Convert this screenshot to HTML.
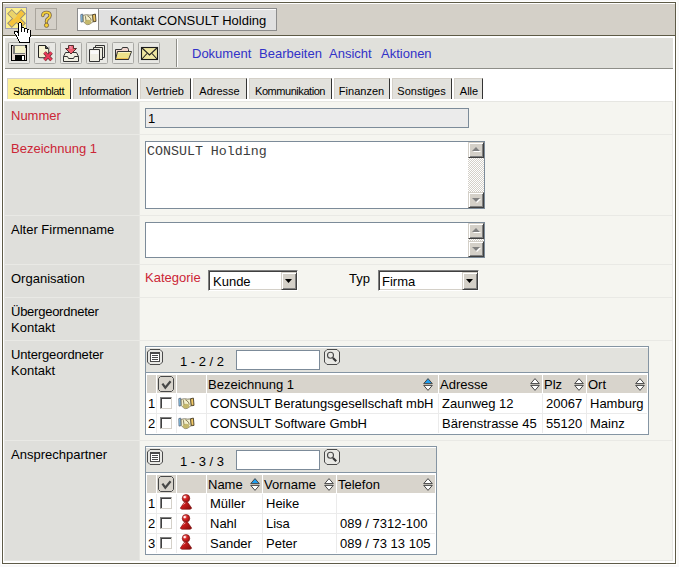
<!DOCTYPE html>
<html><head><meta charset="utf-8">
<style>
*{box-sizing:border-box;margin:0;padding:0}
html,body{width:679px;height:567px;overflow:hidden;background:#f8f8f8;font-family:"Liberation Sans",sans-serif;font-size:13px;color:#000}
.a{position:absolute}
.t{position:absolute;white-space:nowrap;line-height:13px;font-size:13px}
.ts{position:absolute;white-space:nowrap;line-height:11px;font-size:11px}
.red{color:#cc2636}

.sbtrack{background-color:#fff;background-image:linear-gradient(45deg,#d4d0c8 25%,transparent 25%,transparent 75%,#d4d0c8 75%),linear-gradient(45deg,#d4d0c8 25%,transparent 25%,transparent 75%,#d4d0c8 75%);background-size:2px 2px;background-position:0 0,1px 1px}
.sbup,.sbdn{width:16px;height:16px;background:#d4d0c8;border-top:1px solid #d4d0c8;border-left:1px solid #d4d0c8;border-right:1px solid #404040;border-bottom:1px solid #404040;box-shadow:inset 1px 1px 0 #fff,inset -1px -1px 0 #808080}
.sbup:after{content:"";position:absolute;left:3px;top:4px;border-left:4px solid transparent;border-right:4px solid transparent;border-bottom:4px solid #808080;filter:drop-shadow(1px 1px 0 #fff)}
.sbdn:after{content:"";position:absolute;left:3px;top:5px;border-left:4px solid transparent;border-right:4px solid transparent;border-top:4px solid #808080;filter:drop-shadow(1px 1px 0 #fff)}
.sel{height:21px;background:#fff;border-top:1px solid #808080;border-left:1px solid #808080;border-right:1px solid #fff;border-bottom:1px solid #fff;box-shadow:inset 1px 1px 0 #404040,inset -1px -1px 0 #d4d0c8}
.selbtn{width:16px;height:18px;background:#d4d0c8;border-top:1px solid #d4d0c8;border-left:1px solid #d4d0c8;border-right:1px solid #404040;border-bottom:1px solid #404040;box-shadow:inset 1px 1px 0 #fff,inset -1px -1px 0 #808080}
.selbtn:after{content:"";position:absolute;left:3px;top:6px;width:7px;height:4px;background:#000;clip-path:polygon(0 0,100% 0,50% 100%)}
</style></head><body>
<!-- outer frame -->
<div class="a" style="left:2px;top:2px;width:674px;height:562px;border:1px solid #5e5b47;background:#fff;box-shadow:0 0 0 1px #fff"></div>
<!-- title bar -->
<div class="a" style="left:3px;top:4px;width:672px;height:31px;background:#d4d0c8"></div>
<div class="a" style="left:3px;top:35px;width:672px;height:1px;background:#5e5b47"></div>
<!-- X button -->
<div class="a" style="left:5px;top:7px;width:22px;height:22px;border:1px solid #9a9aae;background:#fdf08e"></div>
<!-- ? button -->
<div class="a" style="left:35px;top:8px;width:22px;height:22px;border:1px solid #a9a59d;background:#d4d0c8"></div>
<!-- handshake box -->
<div class="a" style="left:77px;top:8px;width:22px;height:23px;border:1px solid #8c8c8c;background:#fff"></div>
<!-- title label -->
<div class="a" style="left:98px;top:8px;width:179px;height:23px;border:1px solid #8c8c8c;border-top-color:#8c8c8c;background:#e0e0e0;box-shadow:inset 0 1px 0 #fff"></div>
<div class="t" style="left:110px;top:14px">Kontakt CONSULT Holding</div>

<!-- toolbar -->
<div class="a" style="left:5px;top:38px;width:668px;height:30px;background:#e0e0db"></div>
<div class="a" style="left:5px;top:68px;width:668px;height:1px;background:#8e8e88"></div>
<div class="a" style="left:176px;top:39px;width:1px;height:28px;background:#8e8e88"></div>
<div class="a" style="left:177px;top:39px;width:1px;height:28px;background:#fff"></div>
<div class="t" style="left:192px;top:47px;color:#3232c8">Dokument</div>
<div class="t" style="left:259px;top:47px;color:#3232c8">Bearbeiten</div>
<div class="t" style="left:329px;top:47px;color:#3232c8">Ansicht</div>
<div class="t" style="left:381px;top:47px;color:#3232c8">Aktionen</div>

<!-- tabs -->
<div class="a" style="left:7px;top:78px;width:64px;height:21px;border-top:1px solid #d4d0c8;border-left:1px solid #d4d0c8;border-right:1px solid #333;background:#fdf197"></div>
<div class="ts" style="left:7px;top:86px;width:63px;text-align:center;letter-spacing:-0.45px">Stammblatt</div>
<div class="a" style="left:73px;top:78px;width:65px;height:21px;border-top:1px solid #d4d0c8;border-left:1px solid #d4d0c8;border-right:1px solid #333;background:#e2e1dc"></div>
<div class="ts" style="left:73px;top:86px;width:64px;text-align:center;letter-spacing:-0.25px">Information</div>
<div class="a" style="left:140px;top:78px;width:51px;height:21px;border-top:1px solid #d4d0c8;border-left:1px solid #d4d0c8;border-right:1px solid #333;background:#e2e1dc"></div>
<div class="ts" style="left:140px;top:86px;width:50px;text-align:center">Vertrieb</div>
<div class="a" style="left:193px;top:78px;width:54px;height:21px;border-top:1px solid #d4d0c8;border-left:1px solid #d4d0c8;border-right:1px solid #333;background:#e2e1dc"></div>
<div class="ts" style="left:193px;top:86px;width:53px;text-align:center">Adresse</div>
<div class="a" style="left:249px;top:78px;width:83px;height:21px;border-top:1px solid #d4d0c8;border-left:1px solid #d4d0c8;border-right:1px solid #333;background:#e2e1dc"></div>
<div class="ts" style="left:249px;top:86px;width:82px;text-align:center;letter-spacing:-0.45px">Kommunikation</div>
<div class="a" style="left:334px;top:78px;width:56px;height:21px;border-top:1px solid #d4d0c8;border-left:1px solid #d4d0c8;border-right:1px solid #333;background:#e2e1dc"></div>
<div class="ts" style="left:334px;top:86px;width:55px;text-align:center">Finanzen</div>
<div class="a" style="left:392px;top:78px;width:60px;height:21px;border-top:1px solid #d4d0c8;border-left:1px solid #d4d0c8;border-right:1px solid #333;background:#e2e1dc"></div>
<div class="ts" style="left:392px;top:86px;width:59px;text-align:center">Sonstiges</div>
<div class="a" style="left:454px;top:78px;width:29px;height:21px;border-top:1px solid #d4d0c8;border-left:1px solid #d4d0c8;border-right:1px solid #333;background:#e2e1dc"></div>
<div class="ts" style="left:455px;top:86px;width:28px;text-align:center">Alle</div>

<!-- content table background -->
<div class="a" style="left:4px;top:101px;width:669px;height:460px;background:#e6e6e2"></div>
<div class="a" style="left:5px;top:102px;width:134px;height:458px;background:#dfdfdb"></div>
<div class="a" style="left:140px;top:102px;width:532px;height:458px;background:#f5f5f0"></div>
<!-- row separators -->
<div class="a" style="left:5px;top:134px;width:667px;height:1px;background:#e9e9e5"></div>
<div class="a" style="left:5px;top:215px;width:667px;height:1px;background:#e9e9e5"></div>
<div class="a" style="left:5px;top:264px;width:667px;height:1px;background:#e9e9e5"></div>
<div class="a" style="left:5px;top:297px;width:667px;height:1px;background:#e9e9e5"></div>
<div class="a" style="left:5px;top:340px;width:667px;height:1px;background:#e9e9e5"></div>
<div class="a" style="left:5px;top:440px;width:667px;height:1px;background:#e9e9e5"></div>

<!-- labels -->
<div class="t red" style="left:11px;top:109px">Nummer</div>
<div class="t red" style="left:11px;top:142px">Bezeichnung 1</div>
<div class="t" style="left:11px;top:223px">Alter Firmenname</div>
<div class="t" style="left:11px;top:272px">Organisation</div>
<div class="t" style="left:11px;top:305px;letter-spacing:-0.25px">Übergeordneter</div>
<div class="t" style="left:11px;top:321px">Kontakt</div>
<div class="t" style="left:11px;top:348px;letter-spacing:-0.15px">Untergeordneter</div>
<div class="t" style="left:11px;top:364px">Kontakt</div>
<div class="t" style="left:11px;top:448px">Ansprechpartner</div>


<!-- Nummer input -->
<div class="a" style="left:145px;top:108px;width:324px;height:20px;border:1px solid #7c8b99;background:#ebebeb"></div>
<div class="t" style="left:148px;top:112px">1</div>
<!-- textarea 1 -->
<div class="a" style="left:145px;top:141px;width:340px;height:68px;border:1px solid #7c8b99;background:#fff"></div>
<div class="a" style="left:147px;top:144px;white-space:nowrap;font-family:'Liberation Mono',monospace;font-size:13.3px;line-height:15px;color:#3c3c3c">CONSULT Holding</div>
<div class="a sbtrack" style="left:468px;top:142px;width:16px;height:66px"></div>
<div class="a sbup" style="left:468px;top:142px"></div>
<div class="a sbdn" style="left:468px;top:192px"></div>
<!-- textarea 2 -->
<div class="a" style="left:145px;top:222px;width:340px;height:36px;border:1px solid #7c8b99;background:#fff"></div>
<div class="a sbtrack" style="left:468px;top:223px;width:16px;height:34px"></div>
<div class="a sbup" style="left:468px;top:223px"></div>
<div class="a sbdn" style="left:468px;top:241px"></div>
<!-- Organisation -->
<div class="t red" style="left:145px;top:271px">Kategorie</div>
<div class="a sel" style="left:208px;top:270px;width:90px"></div>
<div class="a selbtn" style="left:281px;top:272px"></div>
<div class="t" style="left:213px;top:275px">Kunde</div>
<div class="t" style="left:349px;top:272px">Typ</div>
<div class="a sel" style="left:378px;top:270px;width:101px"></div>
<div class="a selbtn" style="left:462px;top:272px"></div>
<div class="t" style="left:382px;top:275px">Firma</div>































<!-- SUBTABLES -->
<div class="a" style="left:145px;top:346px;width:504px;height:89px;border:1px solid #8595a3;background:#fff"></div>
<div class="a" style="left:146px;top:348px;width:502px;height:24px;background:#e2e2dd;"></div>
<div class="a" style="left:146px;top:372px;width:502px;height:1px;background:#8595a3;"></div>
<svg class="a" style="left:147px;top:349px" width="16" height="16" viewBox="0 0 16 16" shape-rendering="crispEdges">
<path d="M3 0.5H13L15.5 3V13L13 15.5H3L0.5 13V3Z" fill="#e8e8e4" stroke="#4a4a4a" stroke-width="1" shape-rendering="geometricPrecision"/>
<rect x="3" y="3" width="10" height="10" fill="#4a4a4a"/>
<rect x="4" y="5" width="8" height="7" fill="#fff"/>
<rect x="5" y="6" width="6" height="1" fill="#4a4a4a"/>
<rect x="5" y="8" width="6" height="1" fill="#4a4a4a"/>
<rect x="5" y="10" width="6" height="1" fill="#4a4a4a"/>
</svg>
<div class="t" style="left:180px;top:355px;">1 - 2 / 2</div>
<div class="a" style="left:236px;top:350px;width:84px;height:20px;border:1px solid #7c8b99;background:#fff"></div>
<svg class="a" style="left:324px;top:349px" width="16" height="16" viewBox="0 0 16 16">
<path d="M3 0.5H13L15.5 3V13L13 15.5H3L0.5 13V3Z" fill="#e8e8e4" stroke="#4a4a4a" stroke-width="1"/>
<circle cx="6.5" cy="6.3" r="3" fill="none" stroke="#4a4a4a" stroke-width="1.1"/>
<path d="M9 9L12.2 12.2" stroke="#333" stroke-width="2.2"/>
</svg>
<div class="a" style="left:147px;top:375px;width:9px;height:18px;background:#d8d4cc;"></div>
<div class="a" style="left:157px;top:375px;width:19px;height:18px;background:#d8d4cc;"></div>
<div class="a" style="left:177px;top:375px;width:29px;height:18px;background:#d8d4cc;"></div>
<div class="a" style="left:207px;top:375px;width:231px;height:18px;background:#d8d4cc;"></div>
<div class="a" style="left:439px;top:375px;width:103px;height:18px;background:#d8d4cc;"></div>
<div class="a" style="left:543px;top:375px;width:43px;height:18px;background:#d8d4cc;"></div>
<div class="a" style="left:587px;top:375px;width:60px;height:18px;background:#d8d4cc;"></div>
<svg class="a" style="left:158px;top:376px" width="16" height="16" viewBox="0 0 16 16">
<path d="M2.5 0.5H13.5L15.5 2.5V13.5L13.5 15.5H2.5L0.5 13.5V2.5Z" fill="none" stroke="#474747" stroke-width="1"/>
<path d="M4.4 7.6L7.3 11.6L12.6 5.2" fill="none" stroke="#474747" stroke-width="2.2" stroke-linejoin="miter"/>
</svg>
<div class="t" style="left:208px;top:378px;">Bezeichnung 1</div>
<svg class="a" style="left:423px;top:378px" width="10" height="14" viewBox="0 0 10 14">
<path d="M0.7 5.6H9.3L5 0.6Z" fill="#1e9ef0" stroke="#464646" stroke-width="1" stroke-linejoin="round"/>
<path d="M0.7 7.4H9.3L5 12.4Z" fill="#fff" stroke="#464646" stroke-width="1" stroke-linejoin="round"/>
</svg>
<div class="t" style="left:440px;top:378px;">Adresse</div>
<svg class="a" style="left:530px;top:378px" width="10" height="14" viewBox="0 0 10 14">
<path d="M0.7 5.6H9.3L5 0.6Z" fill="#fff" stroke="#464646" stroke-width="1" stroke-linejoin="round"/>
<path d="M0.7 7.4H9.3L5 12.4Z" fill="#fff" stroke="#464646" stroke-width="1" stroke-linejoin="round"/>
</svg>
<div class="t" style="left:544px;top:378px;">Plz</div>
<svg class="a" style="left:574px;top:378px" width="10" height="14" viewBox="0 0 10 14">
<path d="M0.7 5.6H9.3L5 0.6Z" fill="#fff" stroke="#464646" stroke-width="1" stroke-linejoin="round"/>
<path d="M0.7 7.4H9.3L5 12.4Z" fill="#fff" stroke="#464646" stroke-width="1" stroke-linejoin="round"/>
</svg>
<div class="t" style="left:588px;top:378px;">Ort</div>
<svg class="a" style="left:635px;top:378px" width="10" height="14" viewBox="0 0 10 14">
<path d="M0.7 5.6H9.3L5 0.6Z" fill="#fff" stroke="#464646" stroke-width="1" stroke-linejoin="round"/>
<path d="M0.7 7.4H9.3L5 12.4Z" fill="#fff" stroke="#464646" stroke-width="1" stroke-linejoin="round"/>
</svg>
<div class="a" style="left:147px;top:413px;width:500px;height:1px;background:#ebebeb;"></div>
<div class="a" style="left:156px;top:394px;width:1px;height:39px;background:#ebebeb;"></div>
<div class="a" style="left:176px;top:394px;width:1px;height:39px;background:#ebebeb;"></div>
<div class="a" style="left:206px;top:394px;width:1px;height:39px;background:#ebebeb;"></div>
<div class="a" style="left:438px;top:394px;width:1px;height:39px;background:#ebebeb;"></div>
<div class="a" style="left:542px;top:394px;width:1px;height:39px;background:#ebebeb;"></div>
<div class="a" style="left:586px;top:394px;width:1px;height:39px;background:#ebebeb;"></div>
<div class="t" style="left:148px;top:397px;">1</div>
<div class="a" style="left:160px;top:397px;width:12px;height:12px;background:#fff;border-top:1px solid #808080;border-left:1px solid #808080;border-right:1px solid #d4d0c8;border-bottom:1px solid #d4d0c8;box-shadow:inset 1px 1px 0 #404040"></div>
<svg class="a" style="left:178px;top:397px" width="17" height="13" viewBox="0 0 17 13">
<path d="M0.8 1.6L2.6 1.1L3.1 8.6L1 9.1Z" fill="#8ccff4" stroke="#56647a" stroke-width="0.8"/>
<path d="M3.1 2.3Q6.5 1.3 9.5 2.1L12.7 1.9L13.3 8.4Q11.5 10 9.8 11.1Q7.4 12.3 5.5 10.8L3.3 8.5Z" fill="#f4f0cc" stroke="#6a6450" stroke-width="0.8"/>
<ellipse cx="8" cy="9" rx="3.2" ry="2.3" fill="#c4b86c"/>
<path d="M5.4 3.2L6 7.6M7.4 2.8Q9.6 3.6 10.2 5.2M9.6 4.6Q11 5.4 11.2 7.6" fill="none" stroke="#7a7050" stroke-width="0.9"/>
<path d="M12.6 1.7L15.4 1.1L16 8.4L13.3 8.8Z" fill="#e4bc5c" stroke="#4a4028" stroke-width="0.9"/>
<path d="M14 2.4L14.4 7" stroke="#f8d070" stroke-width="0.9"/>
</svg>
<div class="t" style="left:210px;top:397px;">CONSULT Beratungsgesellschaft mbH</div>
<div class="t" style="left:442px;top:397px;">Zaunweg 12</div>
<div class="t" style="left:546px;top:397px;">20067</div>
<div class="t" style="left:590px;top:397px;">Hamburg</div>
<div class="t" style="left:148px;top:417px;">2</div>
<div class="a" style="left:160px;top:417px;width:12px;height:12px;background:#fff;border-top:1px solid #808080;border-left:1px solid #808080;border-right:1px solid #d4d0c8;border-bottom:1px solid #d4d0c8;box-shadow:inset 1px 1px 0 #404040"></div>
<svg class="a" style="left:178px;top:417px" width="17" height="13" viewBox="0 0 17 13">
<path d="M0.8 1.6L2.6 1.1L3.1 8.6L1 9.1Z" fill="#8ccff4" stroke="#56647a" stroke-width="0.8"/>
<path d="M3.1 2.3Q6.5 1.3 9.5 2.1L12.7 1.9L13.3 8.4Q11.5 10 9.8 11.1Q7.4 12.3 5.5 10.8L3.3 8.5Z" fill="#f4f0cc" stroke="#6a6450" stroke-width="0.8"/>
<ellipse cx="8" cy="9" rx="3.2" ry="2.3" fill="#c4b86c"/>
<path d="M5.4 3.2L6 7.6M7.4 2.8Q9.6 3.6 10.2 5.2M9.6 4.6Q11 5.4 11.2 7.6" fill="none" stroke="#7a7050" stroke-width="0.9"/>
<path d="M12.6 1.7L15.4 1.1L16 8.4L13.3 8.8Z" fill="#e4bc5c" stroke="#4a4028" stroke-width="0.9"/>
<path d="M14 2.4L14.4 7" stroke="#f8d070" stroke-width="0.9"/>
</svg>
<div class="t" style="left:210px;top:417px;">CONSULT Software GmbH</div>
<div class="t" style="left:442px;top:417px;">Bärenstrasse 45</div>
<div class="t" style="left:546px;top:417px;">55120</div>
<div class="t" style="left:590px;top:417px;">Mainz</div>
<div class="a" style="left:145px;top:446px;width:292px;height:109px;border:1px solid #8595a3;background:#fff"></div>
<div class="a" style="left:146px;top:448px;width:290px;height:24px;background:#e2e2dd;"></div>
<div class="a" style="left:146px;top:472px;width:290px;height:1px;background:#8595a3;"></div>
<svg class="a" style="left:147px;top:449px" width="16" height="16" viewBox="0 0 16 16" shape-rendering="crispEdges">
<path d="M3 0.5H13L15.5 3V13L13 15.5H3L0.5 13V3Z" fill="#e8e8e4" stroke="#4a4a4a" stroke-width="1" shape-rendering="geometricPrecision"/>
<rect x="3" y="3" width="10" height="10" fill="#4a4a4a"/>
<rect x="4" y="5" width="8" height="7" fill="#fff"/>
<rect x="5" y="6" width="6" height="1" fill="#4a4a4a"/>
<rect x="5" y="8" width="6" height="1" fill="#4a4a4a"/>
<rect x="5" y="10" width="6" height="1" fill="#4a4a4a"/>
</svg>
<div class="t" style="left:180px;top:455px;">1 - 3 / 3</div>
<div class="a" style="left:236px;top:450px;width:84px;height:20px;border:1px solid #7c8b99;background:#fff"></div>
<svg class="a" style="left:324px;top:449px" width="16" height="16" viewBox="0 0 16 16">
<path d="M3 0.5H13L15.5 3V13L13 15.5H3L0.5 13V3Z" fill="#e8e8e4" stroke="#4a4a4a" stroke-width="1"/>
<circle cx="6.5" cy="6.3" r="3" fill="none" stroke="#4a4a4a" stroke-width="1.1"/>
<path d="M9 9L12.2 12.2" stroke="#333" stroke-width="2.2"/>
</svg>
<div class="a" style="left:147px;top:475px;width:9px;height:18px;background:#d8d4cc;"></div>
<div class="a" style="left:157px;top:475px;width:19px;height:18px;background:#d8d4cc;"></div>
<div class="a" style="left:177px;top:475px;width:29px;height:18px;background:#d8d4cc;"></div>
<div class="a" style="left:207px;top:475px;width:55px;height:18px;background:#d8d4cc;"></div>
<div class="a" style="left:263px;top:475px;width:73px;height:18px;background:#d8d4cc;"></div>
<div class="a" style="left:337px;top:475px;width:98px;height:18px;background:#d8d4cc;"></div>
<svg class="a" style="left:158px;top:476px" width="16" height="16" viewBox="0 0 16 16">
<path d="M2.5 0.5H13.5L15.5 2.5V13.5L13.5 15.5H2.5L0.5 13.5V2.5Z" fill="none" stroke="#474747" stroke-width="1"/>
<path d="M4.4 7.6L7.3 11.6L12.6 5.2" fill="none" stroke="#474747" stroke-width="2.2" stroke-linejoin="miter"/>
</svg>
<div class="t" style="left:208px;top:478px;">Name</div>
<svg class="a" style="left:250px;top:478px" width="10" height="14" viewBox="0 0 10 14">
<path d="M0.7 5.6H9.3L5 0.6Z" fill="#1e9ef0" stroke="#464646" stroke-width="1" stroke-linejoin="round"/>
<path d="M0.7 7.4H9.3L5 12.4Z" fill="#fff" stroke="#464646" stroke-width="1" stroke-linejoin="round"/>
</svg>
<div class="t" style="left:264px;top:478px;">Vorname</div>
<svg class="a" style="left:324px;top:478px" width="10" height="14" viewBox="0 0 10 14">
<path d="M0.7 5.6H9.3L5 0.6Z" fill="#fff" stroke="#464646" stroke-width="1" stroke-linejoin="round"/>
<path d="M0.7 7.4H9.3L5 12.4Z" fill="#fff" stroke="#464646" stroke-width="1" stroke-linejoin="round"/>
</svg>
<div class="t" style="left:338px;top:478px;">Telefon</div>
<svg class="a" style="left:423px;top:478px" width="10" height="14" viewBox="0 0 10 14">
<path d="M0.7 5.6H9.3L5 0.6Z" fill="#fff" stroke="#464646" stroke-width="1" stroke-linejoin="round"/>
<path d="M0.7 7.4H9.3L5 12.4Z" fill="#fff" stroke="#464646" stroke-width="1" stroke-linejoin="round"/>
</svg>
<div class="a" style="left:147px;top:513px;width:288px;height:1px;background:#ebebeb;"></div>
<div class="a" style="left:147px;top:533px;width:288px;height:1px;background:#ebebeb;"></div>
<div class="a" style="left:156px;top:494px;width:1px;height:59px;background:#ebebeb;"></div>
<div class="a" style="left:176px;top:494px;width:1px;height:59px;background:#ebebeb;"></div>
<div class="a" style="left:206px;top:494px;width:1px;height:59px;background:#ebebeb;"></div>
<div class="a" style="left:262px;top:494px;width:1px;height:59px;background:#ebebeb;"></div>
<div class="a" style="left:336px;top:494px;width:1px;height:59px;background:#ebebeb;"></div>
<div class="t" style="left:148px;top:497px;">1</div>
<div class="a" style="left:160px;top:497px;width:12px;height:12px;background:#fff;border-top:1px solid #808080;border-left:1px solid #808080;border-right:1px solid #d4d0c8;border-bottom:1px solid #d4d0c8;box-shadow:inset 1px 1px 0 #404040"></div>
<svg class="a" style="left:179px;top:494px" width="14" height="16" viewBox="0 0 14 16">
<defs><radialGradient id="pg179494" cx="0.35" cy="0.3" r="0.8"><stop offset="0" stop-color="#ff9a9a"/><stop offset="0.4" stop-color="#d42828"/><stop offset="1" stop-color="#8a0c0c"/></radialGradient>
<linearGradient id="pb179494" x1="0" y1="0" x2="1" y2="0.6"><stop offset="0" stop-color="#e86060"/><stop offset="0.35" stop-color="#d02020"/><stop offset="1" stop-color="#900e0e"/></linearGradient></defs>
<path d="M7 7.6Q9.2 8 10.3 10.6L12.7 14.1Q12.4 15.2 10.8 15.3H3.2Q1.6 15.2 1.3 14.1L3.7 10.6Q4.8 8 7 7.6Z" fill="url(#pb179494)" stroke="#7a1010" stroke-width="0.6"/>
<path d="M4.6 10.4Q5.4 9 6.4 8.8" stroke="#f8c8c8" stroke-width="1" fill="none"/>
<circle cx="7" cy="4.3" r="3.8" fill="url(#pg179494)" stroke="#7a1010" stroke-width="0.6"/>
<circle cx="5.7" cy="3.1" r="1.2" fill="#fff" opacity="0.9"/>
</svg>
<div class="t" style="left:210px;top:497px;">Müller</div>
<div class="t" style="left:266px;top:497px;">Heike</div>
<div class="t" style="left:340px;top:497px;"></div>
<div class="t" style="left:148px;top:517px;">2</div>
<div class="a" style="left:160px;top:517px;width:12px;height:12px;background:#fff;border-top:1px solid #808080;border-left:1px solid #808080;border-right:1px solid #d4d0c8;border-bottom:1px solid #d4d0c8;box-shadow:inset 1px 1px 0 #404040"></div>
<svg class="a" style="left:179px;top:514px" width="14" height="16" viewBox="0 0 14 16">
<defs><radialGradient id="pg179514" cx="0.35" cy="0.3" r="0.8"><stop offset="0" stop-color="#ff9a9a"/><stop offset="0.4" stop-color="#d42828"/><stop offset="1" stop-color="#8a0c0c"/></radialGradient>
<linearGradient id="pb179514" x1="0" y1="0" x2="1" y2="0.6"><stop offset="0" stop-color="#e86060"/><stop offset="0.35" stop-color="#d02020"/><stop offset="1" stop-color="#900e0e"/></linearGradient></defs>
<path d="M7 7.6Q9.2 8 10.3 10.6L12.7 14.1Q12.4 15.2 10.8 15.3H3.2Q1.6 15.2 1.3 14.1L3.7 10.6Q4.8 8 7 7.6Z" fill="url(#pb179514)" stroke="#7a1010" stroke-width="0.6"/>
<path d="M4.6 10.4Q5.4 9 6.4 8.8" stroke="#f8c8c8" stroke-width="1" fill="none"/>
<circle cx="7" cy="4.3" r="3.8" fill="url(#pg179514)" stroke="#7a1010" stroke-width="0.6"/>
<circle cx="5.7" cy="3.1" r="1.2" fill="#fff" opacity="0.9"/>
</svg>
<div class="t" style="left:210px;top:517px;">Nahl</div>
<div class="t" style="left:266px;top:517px;">Lisa</div>
<div class="t" style="left:340px;top:517px;">089 / 7312-100</div>
<div class="t" style="left:148px;top:537px;">3</div>
<div class="a" style="left:160px;top:537px;width:12px;height:12px;background:#fff;border-top:1px solid #808080;border-left:1px solid #808080;border-right:1px solid #d4d0c8;border-bottom:1px solid #d4d0c8;box-shadow:inset 1px 1px 0 #404040"></div>
<svg class="a" style="left:179px;top:534px" width="14" height="16" viewBox="0 0 14 16">
<defs><radialGradient id="pg179534" cx="0.35" cy="0.3" r="0.8"><stop offset="0" stop-color="#ff9a9a"/><stop offset="0.4" stop-color="#d42828"/><stop offset="1" stop-color="#8a0c0c"/></radialGradient>
<linearGradient id="pb179534" x1="0" y1="0" x2="1" y2="0.6"><stop offset="0" stop-color="#e86060"/><stop offset="0.35" stop-color="#d02020"/><stop offset="1" stop-color="#900e0e"/></linearGradient></defs>
<path d="M7 7.6Q9.2 8 10.3 10.6L12.7 14.1Q12.4 15.2 10.8 15.3H3.2Q1.6 15.2 1.3 14.1L3.7 10.6Q4.8 8 7 7.6Z" fill="url(#pb179534)" stroke="#7a1010" stroke-width="0.6"/>
<path d="M4.6 10.4Q5.4 9 6.4 8.8" stroke="#f8c8c8" stroke-width="1" fill="none"/>
<circle cx="7" cy="4.3" r="3.8" fill="url(#pg179534)" stroke="#7a1010" stroke-width="0.6"/>
<circle cx="5.7" cy="3.1" r="1.2" fill="#fff" opacity="0.9"/>
</svg>
<div class="t" style="left:210px;top:537px;">Sander</div>
<div class="t" style="left:266px;top:537px;">Peter</div>
<div class="t" style="left:340px;top:537px;">089 / 73 13 105</div>
<!-- /SUBTABLES -->
<!-- ICONS -->
<div class="a" style="left:8px;top:42px;width:22px;height:22px;border:1px solid #a9a9a5;border-radius:1.5px;background:#e8e8e4"></div>
<div class="a" style="left:34px;top:42px;width:22px;height:22px;border:1px solid #a9a9a5;border-radius:1.5px;background:#e8e8e4"></div>
<div class="a" style="left:60px;top:42px;width:22px;height:22px;border:1px solid #a9a9a5;border-radius:1.5px;background:#e8e8e4"></div>
<div class="a" style="left:86px;top:42px;width:22px;height:22px;border:1px solid #a9a9a5;border-radius:1.5px;background:#e8e8e4"></div>
<div class="a" style="left:112px;top:42px;width:22px;height:22px;border:1px solid #a9a9a5;border-radius:1.5px;background:#e8e8e4"></div>
<div class="a" style="left:138px;top:42px;width:22px;height:22px;border:1px solid #a9a9a5;border-radius:1.5px;background:#e8e8e4"></div>
<svg class="a" style="left:11px;top:45px" width="17" height="16" viewBox="0 0 17 16" shape-rendering="crispEdges">
<rect x="0" y="0" width="16" height="16" fill="#000"/>
<rect x="1" y="1" width="14" height="14" fill="#e0d4cc"/>
<rect x="2" y="0" width="12" height="9" fill="#7a7a7a"/>
<rect x="4" y="1" width="10" height="7" fill="#f4f0c8"/>
<rect x="4" y="10" width="10" height="5" fill="#000"/>
<rect x="11" y="11" width="2" height="4" fill="#fff"/>
<rect x="14" y="1" width="1" height="2" fill="#444"/>
</svg>
<svg class="a" style="left:37px;top:44px" width="18" height="19" viewBox="0 0 18 19">
<path d="M1.5 1.5H8.5L11.5 4.5V13.5H1.5Z" fill="#f6f2d2" stroke="#222" stroke-width="1"/>
<path d="M8.5 1.5V4.5H11.5" fill="#555" stroke="#222" stroke-width="1"/>
<path d="M12 2.5V14H2.5" fill="none" stroke="#9a9a9a" stroke-width="1"/>
<path d="M7.5 8.5L14.5 16M14.5 8.5L7.5 16" stroke="#6a3030" stroke-width="3.6"/>
<path d="M7.5 8.5L14.5 16M14.5 8.5L7.5 16" stroke="#ea3a5a" stroke-width="2.2"/>
</svg>
<svg class="a" style="left:62px;top:44px" width="18" height="19" viewBox="0 0 18 19">
<path d="M3.5 8.5H14.5L16.5 12.5V17.5H1.5V12.5Z" fill="#f0eee2" stroke="#333" stroke-width="1"/>
<path d="M1.5 12.5H5.5L6.5 14.5H11.5L12.5 12.5H16.5" fill="none" stroke="#333" stroke-width="1"/>
<path d="M6.5 1.5H11.5V4.5H14.5L9 10L3.5 4.5H6.5Z" fill="#ee6070" stroke="#553030" stroke-width="1"/>
<path d="M7.5 2.5H9V5" stroke="#f8a0c0" stroke-width="1" fill="none"/>
</svg>
<svg class="a" style="left:88px;top:44px" width="18" height="19" viewBox="0 0 18 19">
<path d="M7.5 1.5H16.5V13.5H7.5Z" fill="#ecebe0" stroke="#333" stroke-width="1"/>
<path d="M5.5 3.5H14.5V15.5H5.5Z" fill="#ecebe0" stroke="#333" stroke-width="1"/>
<path d="M1.5 5.5H11.5V17.5H1.5Z" fill="#efeee4" stroke="#333" stroke-width="1"/>
<path d="M2.5 6.5H10.5V10H2.5Z" fill="#fafafa"/>
</svg>
<svg class="a" style="left:114px;top:45px" width="19" height="17" viewBox="0 0 19 17">
<path d="M1.5 4.5H7.5L8.5 2.5H13.5L14.5 4.5V14.5H1.5Z" fill="#f0d4cc" stroke="#333" stroke-width="1"/>
<path d="M3.5 6.5H17.5L14.5 14.5H1.5Z" fill="#eee28a" stroke="#333" stroke-width="1"/>
<path d="M4 7.5H16.5" stroke="#f8f4c0" stroke-width="1"/>
<path d="M2.5 13.5H14" stroke="#f0c050" stroke-width="1"/>
</svg>
<svg class="a" style="left:140px;top:46px" width="19" height="15" viewBox="0 0 19 15">
<rect x="1.5" y="1.5" width="16" height="12" fill="#efe6a0" stroke="#1a1a1a" stroke-width="1.1"/>
<path d="M1.5 1.5L9.5 9L17.5 1.5" fill="none" stroke="#222" stroke-width="1.1"/>
<path d="M1.5 13.5L7 7.5M17.5 13.5L12 7.5" fill="none" stroke="#222" stroke-width="1.1"/>
</svg>
<svg class="a" style="left:6px;top:8px" width="21" height="21" viewBox="0 0 21 21">
<path d="M3.4 3.4L17.6 17.6M17.6 3.4L3.4 17.6" stroke="#8e8a80" stroke-width="6.6"/>
<path d="M4.1 4.1L16.9 16.9M16.9 4.1L4.1 16.9" stroke="#f6c43c" stroke-width="4.9"/>
<path d="M4.1 4.1L9.6 9.6" stroke="#ead36a" stroke-width="4.9"/>
</svg>
<svg class="a" style="left:36px;top:9px" width="21" height="21" viewBox="0 0 21 21">
<path d="M6.8 6.6Q6.8 3.4 10.5 3.4Q14.1 3.4 14.1 6.5Q14.1 8.4 12 9.6Q10.4 10.5 10.4 12.8" fill="none" stroke="#7a6648" stroke-width="3.4" stroke-linecap="round"/>
<path d="M6.8 6.6Q6.8 3.4 10.5 3.4Q14.1 3.4 14.1 6.5Q14.1 8.4 12 9.6Q10.4 10.5 10.4 12.8" fill="none" stroke="#f8d43a" stroke-width="1.7" stroke-linecap="round"/>
<circle cx="10.5" cy="16.3" r="2.1" fill="#f8d030" stroke="#7a6648" stroke-width="0.9"/>
</svg>
<svg class="a" style="left:80px;top:13px" width="17" height="13" viewBox="0 0 17 13">
<path d="M0.8 1.6L2.6 1.1L3.1 8.6L1 9.1Z" fill="#8ccff4" stroke="#56647a" stroke-width="0.8"/>
<path d="M3.1 2.3Q6.5 1.3 9.5 2.1L12.7 1.9L13.3 8.4Q11.5 10 9.8 11.1Q7.4 12.3 5.5 10.8L3.3 8.5Z" fill="#f4f0cc" stroke="#6a6450" stroke-width="0.8"/>
<ellipse cx="8" cy="9" rx="3.2" ry="2.3" fill="#c4b86c"/>
<path d="M5.4 3.2L6 7.6M7.4 2.8Q9.6 3.6 10.2 5.2M9.6 4.6Q11 5.4 11.2 7.6" fill="none" stroke="#7a7050" stroke-width="0.9"/>
<path d="M12.6 1.7L15.4 1.1L16 8.4L13.3 8.8Z" fill="#e4bc5c" stroke="#4a4028" stroke-width="0.9"/>
<path d="M14 2.4L14.4 7" stroke="#f8d070" stroke-width="0.9"/>
</svg>
<svg class="a" style="left:14px;top:22px" width="17" height="21" viewBox="0 0 17 21" shape-rendering="crispEdges"><rect x="5" y="0" width="2" height="1" fill="#fff"/><rect x="4" y="1" width="4" height="1" fill="#fff"/><rect x="4" y="2" width="4" height="1" fill="#fff"/><rect x="4" y="3" width="4" height="1" fill="#fff"/><rect x="4" y="4" width="4" height="1" fill="#fff"/><rect x="4" y="5" width="6" height="1" fill="#fff"/><rect x="4" y="6" width="9" height="1" fill="#fff"/><rect x="4" y="7" width="11" height="1" fill="#fff"/><rect x="4" y="8" width="13" height="1" fill="#fff"/><rect x="0" y="9" width="17" height="1" fill="#fff"/><rect x="0" y="10" width="17" height="1" fill="#fff"/><rect x="0" y="11" width="17" height="1" fill="#fff"/><rect x="1" y="12" width="16" height="1" fill="#fff"/><rect x="2" y="13" width="15" height="1" fill="#fff"/><rect x="2" y="14" width="15" height="1" fill="#fff"/><rect x="3" y="15" width="13" height="1" fill="#fff"/><rect x="3" y="16" width="13" height="1" fill="#fff"/><rect x="4" y="17" width="12" height="1" fill="#fff"/><rect x="4" y="18" width="12" height="1" fill="#fff"/><rect x="5" y="19" width="11" height="1" fill="#fff"/><rect x="5" y="20" width="11" height="1" fill="#fff"/><rect x="5" y="0" width="1" height="1" fill="#000"/><rect x="6" y="0" width="1" height="1" fill="#000"/><rect x="4" y="1" width="1" height="1" fill="#000"/><rect x="7" y="1" width="1" height="1" fill="#000"/><rect x="4" y="2" width="1" height="1" fill="#000"/><rect x="7" y="2" width="1" height="1" fill="#000"/><rect x="4" y="3" width="1" height="1" fill="#000"/><rect x="7" y="3" width="1" height="1" fill="#000"/><rect x="4" y="4" width="1" height="1" fill="#000"/><rect x="7" y="4" width="1" height="1" fill="#000"/><rect x="4" y="5" width="1" height="1" fill="#000"/><rect x="7" y="5" width="1" height="1" fill="#000"/><rect x="8" y="5" width="1" height="1" fill="#000"/><rect x="9" y="5" width="1" height="1" fill="#000"/><rect x="4" y="6" width="1" height="1" fill="#000"/><rect x="7" y="6" width="1" height="1" fill="#000"/><rect x="10" y="6" width="1" height="1" fill="#000"/><rect x="11" y="6" width="1" height="1" fill="#000"/><rect x="12" y="6" width="1" height="1" fill="#000"/><rect x="4" y="7" width="1" height="1" fill="#000"/><rect x="7" y="7" width="1" height="1" fill="#000"/><rect x="10" y="7" width="1" height="1" fill="#000"/><rect x="13" y="7" width="1" height="1" fill="#000"/><rect x="14" y="7" width="1" height="1" fill="#000"/><rect x="4" y="8" width="1" height="1" fill="#000"/><rect x="7" y="8" width="1" height="1" fill="#000"/><rect x="10" y="8" width="1" height="1" fill="#000"/><rect x="13" y="8" width="1" height="1" fill="#000"/><rect x="16" y="8" width="1" height="1" fill="#000"/><rect x="0" y="9" width="1" height="1" fill="#000"/><rect x="1" y="9" width="1" height="1" fill="#000"/><rect x="2" y="9" width="1" height="1" fill="#000"/><rect x="3" y="9" width="1" height="1" fill="#000"/><rect x="4" y="9" width="1" height="1" fill="#000"/><rect x="7" y="9" width="1" height="1" fill="#000"/><rect x="10" y="9" width="1" height="1" fill="#000"/><rect x="13" y="9" width="1" height="1" fill="#000"/><rect x="16" y="9" width="1" height="1" fill="#000"/><rect x="0" y="10" width="1" height="1" fill="#000"/><rect x="3" y="10" width="1" height="1" fill="#000"/><rect x="4" y="10" width="1" height="1" fill="#000"/><rect x="13" y="10" width="1" height="1" fill="#000"/><rect x="16" y="10" width="1" height="1" fill="#000"/><rect x="0" y="11" width="1" height="1" fill="#000"/><rect x="4" y="11" width="1" height="1" fill="#000"/><rect x="16" y="11" width="1" height="1" fill="#000"/><rect x="1" y="12" width="1" height="1" fill="#000"/><rect x="4" y="12" width="1" height="1" fill="#000"/><rect x="16" y="12" width="1" height="1" fill="#000"/><rect x="2" y="13" width="1" height="1" fill="#000"/><rect x="4" y="13" width="1" height="1" fill="#000"/><rect x="16" y="13" width="1" height="1" fill="#000"/><rect x="2" y="14" width="1" height="1" fill="#000"/><rect x="16" y="14" width="1" height="1" fill="#000"/><rect x="3" y="15" width="1" height="1" fill="#000"/><rect x="15" y="15" width="1" height="1" fill="#000"/><rect x="3" y="16" width="1" height="1" fill="#000"/><rect x="15" y="16" width="1" height="1" fill="#000"/><rect x="4" y="17" width="1" height="1" fill="#000"/><rect x="15" y="17" width="1" height="1" fill="#000"/><rect x="4" y="18" width="1" height="1" fill="#000"/><rect x="15" y="18" width="1" height="1" fill="#000"/><rect x="5" y="19" width="1" height="1" fill="#000"/><rect x="15" y="19" width="1" height="1" fill="#000"/><rect x="5" y="20" width="1" height="1" fill="#000"/><rect x="6" y="20" width="1" height="1" fill="#000"/><rect x="7" y="20" width="1" height="1" fill="#000"/><rect x="8" y="20" width="1" height="1" fill="#000"/><rect x="9" y="20" width="1" height="1" fill="#000"/><rect x="10" y="20" width="1" height="1" fill="#000"/><rect x="11" y="20" width="1" height="1" fill="#000"/><rect x="12" y="20" width="1" height="1" fill="#000"/><rect x="13" y="20" width="1" height="1" fill="#000"/><rect x="14" y="20" width="1" height="1" fill="#000"/><rect x="15" y="20" width="1" height="1" fill="#000"/></svg>
<!-- /ICONS -->
</body></html>
